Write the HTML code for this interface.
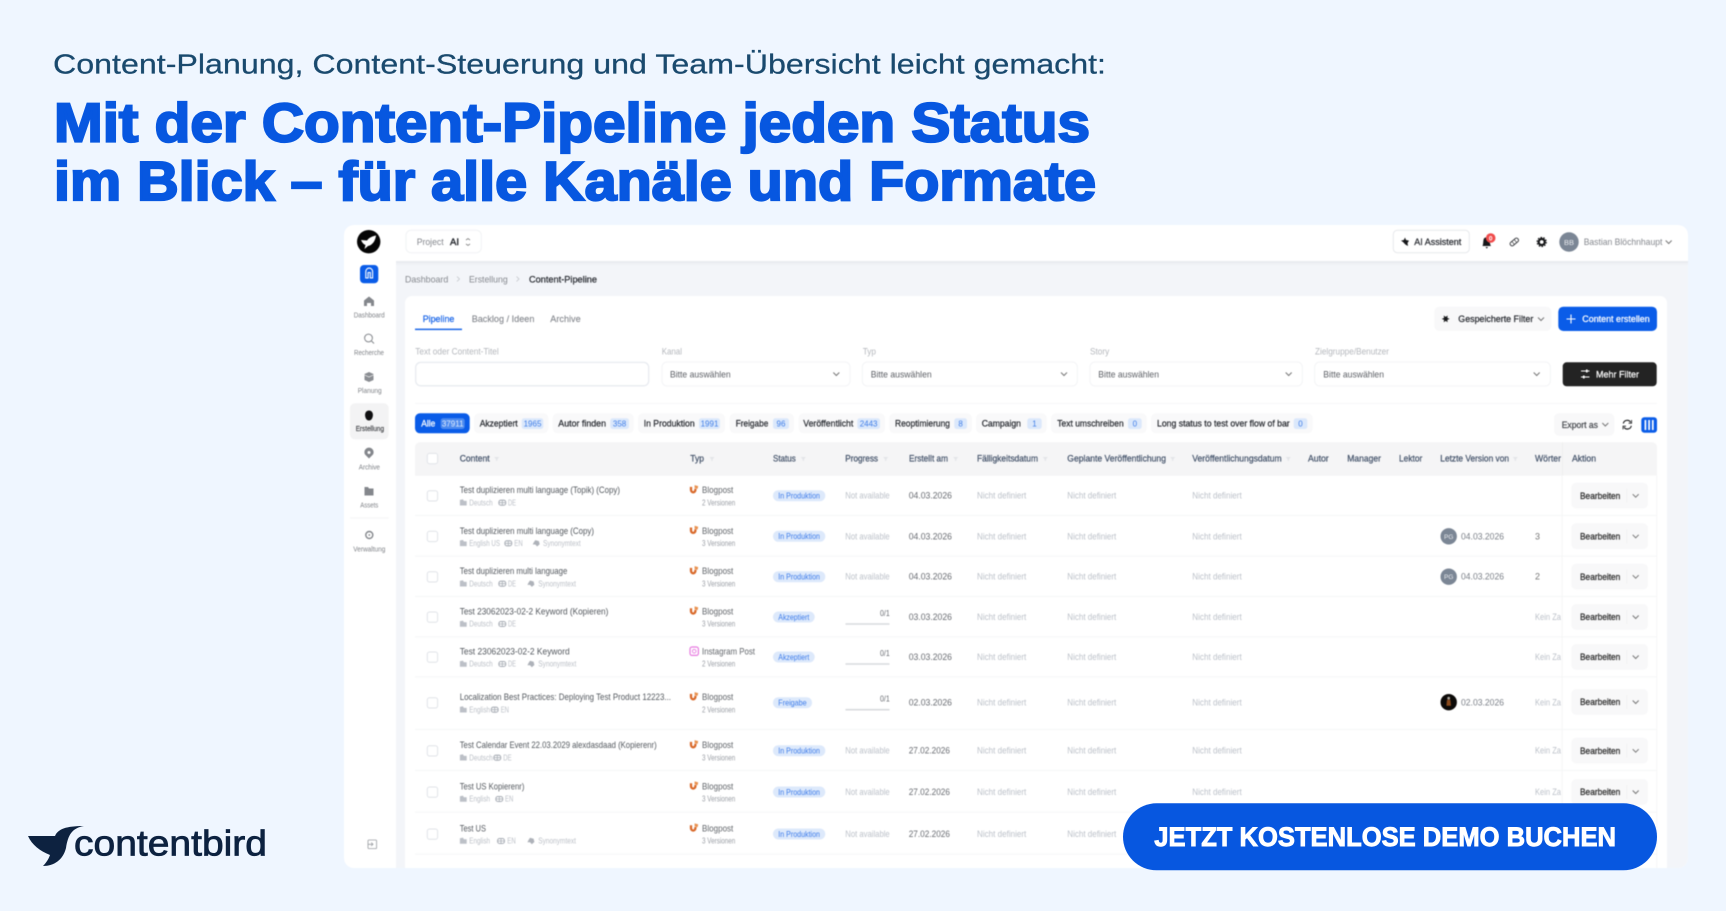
<!DOCTYPE html>
<html lang="de">
<head>
<meta charset="utf-8">
<title>Content-Pipeline</title>
<style>
html,body{margin:0;padding:0;width:1726px;height:911px;overflow:hidden;background:#eff6ff}
svg{display:block}
text{font-family:"Liberation Sans",sans-serif;white-space:pre}
.sl{font-size:7.5px;fill:#7f8287}
.d{font-size:9.5px;fill:#2a2d33;stroke:#2a2d33;stroke-width:.25px}
.g{font-size:9.5px;fill:#85888e}
.lb{font-size:9.5px;fill:#b4b7bc}
.nd{font-size:9.5px;fill:#bcc1c9}
.th{font-size:9.5px;fill:#46556c;stroke:#46556c;stroke-width:.25px}
.ti{font-size:9.5px;fill:#53585e}
.su{font-size:8px;fill:#bcc0c7}
.ty{font-size:9.5px;fill:#62666b}
.ve{font-size:8px;fill:#9a9ea5}
.da{font-size:9.5px;fill:#686b71}
.pl{font-size:8.5px;fill:#3d7cea}
.ba{font-size:8px;fill:#3f7ee8;text-anchor:middle}
.w{font-size:9.5px;fill:#fff;stroke:#fff;stroke-width:.25px}
.be{font-size:9.5px;fill:#333;stroke:#333;stroke-width:.3px}
</style>
</head>
<body>
<svg width="1726" height="911" viewBox="0 0 1726 911" xmlns="http://www.w3.org/2000/svg">
<defs>
<path id="ch" d="M-3,-1.5 L0,1.5 L3,-1.5" fill="none" stroke="#777" stroke-width="1"/>
<path id="so" d="M-2.5,-2 H2.5 L.6,.4 V2 H-.6 V.4 Z" fill="#e3e5e8"/>
<rect id="cb" width="10.3" height="10.3" rx="2.2" fill="#fff" stroke="#e0e3e8" stroke-width="1"/>
<g id="bl"><path d="M-3,-2.8 V.2 A2.2,2.4 0 0 0 1.4,.2 V-1" fill="none" stroke="#d9692a" stroke-width="2.3"/><path d="M.6,-4.6 L4.2,-3.6 L3.6,-.8 L.6,-1.6 Z" fill="#e8914f"/></g>
<g id="fo"><path d="M-3.4,-2.8 L-.4,-3.4 L.6,-1.8 H3.4 V2.8 H-3.4 Z" fill="#bcc0c7"/></g>
<g id="gl"><rect x="-3.4" y="-2.5" width="6.8" height="5" rx="2" fill="none" stroke="#a9aeb6" stroke-width="1.1"/><path d="M0,-2.5 V2.5 M-3,0 H3" stroke="#a9aeb6" stroke-width=".8"/></g>
<g id="sy"><path d="M-1,-3.2 L2.6,-2.2 L3.4,1 L.8,3.2 L-1,1.2 L-3.6,1.2 L-2.6,-.8 Z" fill="#aeb2b9"/></g>
<g id="bt"><rect x="1571.3" y="-13" width="76.7" height="25.8" rx="5" fill="#f8f8f9"/><text class="be" x="1580" y="3.2" textLength="40.3" lengthAdjust="spacingAndGlyphs">Bearbeiten</text><rect x="1626.4" y="-7" width=".8" height="14" fill="#f0f0f1"/><use href="#ch" x="1635.7" y="0"/></g>
</defs>

<rect width="1726" height="911" fill="#eff6ff"/>

<!-- headline -->
<text x="53" y="73.5" style="font-size:28px;fill:#1a4a6e;stroke:#1a4a6e;stroke-width:.25px" textLength="1053" lengthAdjust="spacingAndGlyphs">Content-Planung, Content-Steuerung und Team-Übersicht leicht gemacht:</text>
<text x="54" y="141.7" style="font-size:55px;font-weight:700;fill:#0757e0;stroke:#0757e0;stroke-width:2.2px" textLength="1036" lengthAdjust="spacingAndGlyphs">Mit der Content-Pipeline jeden Status</text>
<text x="54" y="200" style="font-size:55px;font-weight:700;fill:#0757e0;stroke:#0757e0;stroke-width:2.2px" textLength="1042" lengthAdjust="spacingAndGlyphs">im Blick – für alle Kanäle und Formate</text>

<!-- logo -->
<path d="M28,836 L55,836 C58,829 66,826 84,826 C72,828 68,835 66,848 C63,860 54,866 43,866 C47,862 49,858 50,855 C40,851 32,845 28,836Z" fill="#0d2240"/>
<text x="74" y="855.3" style="font-size:36px;fill:#0d2240;stroke:#0d2240;stroke-width:.8px" textLength="193" lengthAdjust="spacingAndGlyphs">contentbird</text>

<!-- app -->
<g style="filter:blur(.4px)">
<rect x="344" y="225" width="1344" height="643" rx="10" fill="#fff"/>
<path d="M396,261 H1688 V858 A10,10 0 0 1 1678,868 H396 Z" fill="#f3f5f9"/>
<rect x="396" y="261" width="1292" height="2" fill="#e9ebf0"/>
<rect x="396" y="263" width="1292" height="2" fill="#eff1f5"/>
<path d="M405,868 V303 A7,7 0 0 1 412,296 H1660 A7,7 0 0 1 1667,303 V868 Z" fill="#fff"/>

<!-- sidebar -->
<circle cx="368.7" cy="241.7" r="11.7" fill="#050505"/>
<path d="M361,240 L367,240.5 C369,237.5 373,236 376,235.5 C375.5,240 373,245 368,246 L364.5,249 L365.5,245 C363,244 362,242 361,240Z" fill="#fff"/>
<rect x="360" y="265" width="18.3" height="18.3" rx="4" fill="#0a5ce8"/>
<path d="M365.8,278 V271.5 A3.4,3.4 0 0 1 372.6,271.5 V278 H370.3 V272.5 H368.1 V278 Z" fill="none" stroke="#fff" stroke-width="1.1"/>
<path d="M369,296.5 L374,300.5 V306 H371 V303 H367 V306 H364 V300.5 Z" fill="#84878c"/>
<text class="sl" x="353.7" y="317.7" textLength="31" lengthAdjust="spacingAndGlyphs">Dashboard</text>
<circle cx="368.5" cy="338" r="3.9" fill="none" stroke="#84878c" stroke-width="1"/><path d="M371.5,341 L374,343.5" stroke="#84878c" stroke-width="1"/>
<text class="sl" x="354" y="355" textLength="30" lengthAdjust="spacingAndGlyphs">Recherche</text>
<path d="M364.5,374 L369,372 L373.5,374 V380 L369,382 L364.5,380 Z" fill="#8b8e93"/><path d="M364.5,375 L369,377 L373.5,375" fill="none" stroke="#fff" stroke-width=".6"/>
<text class="sl" x="357.7" y="393" textLength="24" lengthAdjust="spacingAndGlyphs">Planung</text>
<rect x="350" y="403.3" width="38.7" height="36" rx="5" fill="#f3f3f4"/>
<path d="M369,410.5 C366.5,410.5 365.5,412.5 365.5,413 C364.5,414 365,420.5 369,420.5 C373,420.5 373.5,414 372.5,413 C372.5,412.5 371.5,410.5 369,410.5Z" fill="#101012"/>
<text class="sl" x="355.7" y="431" textLength="28.3" lengthAdjust="spacingAndGlyphs" style="fill:#3a3c40;stroke:#3a3c40;stroke-width:.15px">Erstellung</text>
<path d="M369,458.5 L365,454.5 A4.6,4.6 0 1 1 373,454.5 Z" fill="#84878c"/><circle cx="369" cy="452.5" r="1.5" fill="#fff"/>
<text class="sl" x="358.7" y="469.7" textLength="21.3" lengthAdjust="spacingAndGlyphs">Archive</text>
<path d="M364.5,487 H368 L369,488.5 H373.5 V495.5 H364.5 Z" fill="#84878c"/>
<text class="sl" x="360.3" y="507.3" textLength="18" lengthAdjust="spacingAndGlyphs">Assets</text>
<rect x="350" y="517.5" width="38.7" height=".8" fill="#f1f2f3"/>
<circle cx="369.3" cy="535" r="3.5" fill="none" stroke="#84878c" stroke-width="1.4"/><circle cx="369.3" cy="535" r=".9" fill="#84878c"/>
<text class="sl" x="353.3" y="551.7" textLength="32" lengthAdjust="spacingAndGlyphs">Verwaltung</text>
<rect x="368" y="840" width="8.6" height="8.6" rx="1" fill="none" stroke="#9a9da2" stroke-width=".8"/><path d="M368,844.3 H373 M371.2,842.5 L373,844.3 L371.2,846" fill="none" stroke="#9a9da2" stroke-width=".8"/>

<!-- top bar -->
<rect x="406" y="230.3" width="75.3" height="22.4" rx="5" fill="#fff" stroke="#f1f3f5"/>
<text class="g" x="416.7" y="245" textLength="27" lengthAdjust="spacingAndGlyphs">Project</text>
<text class="d" x="450" y="245" textLength="9" lengthAdjust="spacingAndGlyphs" style="stroke-width:.4px">AI</text>
<path d="M466,240 L468,238.6 L470,240 M466,244 L468,245.4 L470,244" fill="none" stroke="#777" stroke-width=".8"/>
<rect x="1393.3" y="230.3" width="76" height="22.4" rx="4" fill="#fff" stroke="#e7e9ec"/>
<path d="M1405,237.5 L1406,240 L1409,240.6 L1407.5,243 L1408,246 L1405.5,244.6 L1403,242 L1401,240.6 L1403.8,240 Z" fill="#17181a"/>
<text class="d" x="1414.3" y="245" textLength="47" lengthAdjust="spacingAndGlyphs">AI Assistent</text>
<path d="M1482.5,246 C1483.5,244 1483,240 1484,238.5 C1485,237 1488,237 1489,238.5 C1490,240 1489.5,244 1491,246 Z M1485.5,247 H1488 L1486.8,248.6 Z" fill="#17181a"/>
<circle cx="1490.7" cy="238" r="4.8" fill="#ef4b4b"/><text x="1490.7" y="240.3" style="font-size:6.5px;fill:#fff;text-anchor:middle;font-weight:700">0</text>
<g transform="translate(1514.3,242) rotate(-40)"><rect x="-4.8" y="-2" width="9.6" height="4" rx="1.8" fill="none" stroke="#3d3f43" stroke-width="1"/><path d="M-1.5,-2 V2 M1.5,-2 V2" stroke="#3d3f43" stroke-width=".7"/></g>
<circle cx="1541.7" cy="242" r="3" fill="none" stroke="#141517" stroke-width="2.2"/><circle cx="1541.7" cy="242" r="4.6" fill="none" stroke="#141517" stroke-width="1.1" stroke-dasharray="1.6 1.3"/>
<circle cx="1569" cy="242" r="9.7" fill="#7b8695"/>
<text x="1569" y="245" style="font-size:7.5px;fill:#e8eaee;text-anchor:middle">BB</text>
<text class="g" x="1583.7" y="245" textLength="78.7" lengthAdjust="spacingAndGlyphs">Bastian Blöchnhaupt</text>
<use href="#ch" x="1668.7" y="242"/>

<!-- breadcrumb -->
<text class="g" x="405" y="282.3" textLength="43.3" lengthAdjust="spacingAndGlyphs">Dashboard</text>
<path d="M457,276.5 L459.5,279 L457,281.5" fill="none" stroke="#c3c6cb" stroke-width=".8"/>
<text class="g" x="469" y="282.3" textLength="38.7" lengthAdjust="spacingAndGlyphs">Erstellung</text>
<path d="M516.5,276.5 L519,279 L516.5,281.5" fill="none" stroke="#c3c6cb" stroke-width=".8"/>
<text class="d" x="529" y="282.3" textLength="68" lengthAdjust="spacingAndGlyphs">Content-Pipeline</text>

<!-- tabs -->
<text class="d" x="422.7" y="322" textLength="31.7" lengthAdjust="spacingAndGlyphs" style="fill:#1a66e8;stroke:#1a66e8">Pipeline</text>
<rect x="415" y="328.6" width="47" height="1.5" fill="#1a66e8"/>
<text class="g" x="471.7" y="322" textLength="62.7" lengthAdjust="spacingAndGlyphs" style="stroke:#8d9096;stroke-width:.15px">Backlog / Ideen</text>
<text class="g" x="550.3" y="322" textLength="30.4" lengthAdjust="spacingAndGlyphs" style="stroke:#8d9096;stroke-width:.15px">Archive</text>

<rect x="1434.3" y="306.7" width="117" height="24.3" rx="5" fill="#f8f8f9"/>
<path d="M1445.7,318.9 m-4,0 l2.4,-1 l-.4,-2.4 l2,1.4 l2,-1.4 l-.4,2.4 l2.4,1 l-2.4,1 l.4,2.4 l-2,-1.4 l-2,1.4 l.4,-2.4 Z" fill="#17181a"/>
<text class="d" x="1458.3" y="322" textLength="75" lengthAdjust="spacingAndGlyphs">Gespeicherte Filter</text>
<use href="#ch" x="1541" y="319"/>
<rect x="1558.3" y="306.7" width="98.7" height="24.3" rx="5" fill="#0a5ce8"/>
<path d="M1571,314.5 V323.5 M1566.5,319 H1575.5" stroke="#fff" stroke-width="1.1"/>
<text class="w" x="1582.3" y="322" textLength="67.4" lengthAdjust="spacingAndGlyphs">Content erstellen</text>

<!-- filters -->
<text class="lb" x="415.3" y="354.3" textLength="83.4" lengthAdjust="spacingAndGlyphs">Text oder Content-Titel</text>
<rect x="415.7" y="362.4" width="233" height="23.4" rx="5" fill="#fff" stroke="#e8ebf0" stroke-width="1.3"/>
<text class="lb" x="661.7" y="354.3" textLength="20.3" lengthAdjust="spacingAndGlyphs">Kanal</text>
<rect x="662" y="362" width="188" height="24" rx="5" fill="#fff" stroke="#f3f4f6"/>
<text class="g" x="670" y="377.3" textLength="60.7" lengthAdjust="spacingAndGlyphs" style="fill:#5d6066">Bitte auswählen</text>
<use href="#ch" x="836.3" y="374"/>
<text class="lb" x="862.7" y="354.3" textLength="13.3" lengthAdjust="spacingAndGlyphs">Typ</text>
<rect x="862.3" y="362" width="215" height="24" rx="5" fill="#fff" stroke="#f3f4f6"/>
<text class="g" x="870.7" y="377.3" textLength="61" lengthAdjust="spacingAndGlyphs" style="fill:#5d6066">Bitte auswählen</text>
<use href="#ch" x="1064" y="374"/>
<text class="lb" x="1090" y="354.3" textLength="19.3" lengthAdjust="spacingAndGlyphs">Story</text>
<rect x="1090" y="362" width="212.3" height="24" rx="5" fill="#fff" stroke="#f3f4f6"/>
<text class="g" x="1098.3" y="377.3" textLength="60.7" lengthAdjust="spacingAndGlyphs" style="fill:#5d6066">Bitte auswählen</text>
<use href="#ch" x="1288.7" y="374"/>
<text class="lb" x="1315" y="354.3" textLength="74" lengthAdjust="spacingAndGlyphs">Zielgruppe/Benutzer</text>
<rect x="1314.7" y="362" width="235.6" height="24" rx="5" fill="#fff" stroke="#f3f4f6"/>
<text class="g" x="1323.3" y="377.3" textLength="60.7" lengthAdjust="spacingAndGlyphs" style="fill:#5d6066">Bitte auswählen</text>
<use href="#ch" x="1536.7" y="374"/>
<rect x="1562.7" y="362.3" width="94" height="24" rx="4" fill="#232323"/>
<path d="M1581,371 H1589.5 M1581,377 H1589.5" stroke="#fff" stroke-width="1"/><rect x="1586" y="369.5" width="1.6" height="3" fill="#fff"/><rect x="1583" y="375.5" width="1.6" height="3" fill="#fff"/>
<text class="w" x="1596" y="377.3" textLength="43" lengthAdjust="spacingAndGlyphs">Mehr Filter</text>
<rect x="415" y="403" width="1242" height=".9" fill="#f5f6f7"/>

<!-- chips -->
<rect x="415" y="413.3" width="54.7" height="20" rx="5" fill="#0a5ce8"/>
<text class="w" x="421.3" y="426.3" textLength="14" lengthAdjust="spacingAndGlyphs">Alle</text>
<rect x="440.7" y="418.3" width="24" height="10.7" rx="2.5" fill="#4d8bef"/>
<text x="452.7" y="426.4" style="font-size:8px;fill:#e4eefc;text-anchor:middle">37911</text>

<rect x="474" y="413.3" width="74.3" height="20" rx="5" fill="#f9f9fa"/>
<text class="d" x="479.7" y="426.3" textLength="38" lengthAdjust="spacingAndGlyphs">Akzeptiert</text>
<rect x="521.7" y="418.3" width="21.6" height="10.7" rx="2.5" fill="#dbe8fb"/><text class="ba" x="532.5" y="426.4">1965</text>

<rect x="552.7" y="413.3" width="81" height="20" rx="5" fill="#f9f9fa"/>
<text class="d" x="558.3" y="426.3" textLength="47.7" lengthAdjust="spacingAndGlyphs">Autor finden</text>
<rect x="610.3" y="418.3" width="18.7" height="10.7" rx="2.5" fill="#dbe8fb"/><text class="ba" x="619.6" y="426.4">358</text>

<rect x="638" y="413.3" width="87" height="20" rx="5" fill="#f9f9fa"/>
<text class="d" x="643.7" y="426.3" textLength="51" lengthAdjust="spacingAndGlyphs">In Produktion</text>
<rect x="699" y="418.3" width="21" height="10.7" rx="2.5" fill="#dbe8fb"/><text class="ba" x="709.5" y="426.4">1991</text>

<rect x="729.7" y="413.3" width="64.3" height="20" rx="5" fill="#f9f9fa"/>
<text class="d" x="735.7" y="426.3" textLength="32.6" lengthAdjust="spacingAndGlyphs">Freigabe</text>
<rect x="773" y="418.3" width="16" height="10.7" rx="2.5" fill="#dbe8fb"/><text class="ba" x="781" y="426.4">96</text>

<rect x="798.7" y="413.3" width="86.3" height="20" rx="5" fill="#f9f9fa"/>
<text class="d" x="803.3" y="426.3" textLength="50" lengthAdjust="spacingAndGlyphs">Veröffentlicht</text>
<rect x="857.3" y="418.3" width="22.7" height="10.7" rx="2.5" fill="#dbe8fb"/><text class="ba" x="868.6" y="426.4">2443</text>

<rect x="889.3" y="413.3" width="82.7" height="20" rx="5" fill="#f9f9fa"/>
<text class="d" x="895" y="426.3" textLength="55" lengthAdjust="spacingAndGlyphs">Reoptimierung</text>
<rect x="954.3" y="418.3" width="12.7" height="10.7" rx="2.5" fill="#dbe8fb"/><text class="ba" x="960.6" y="426.4">8</text>

<rect x="976" y="413.3" width="70.7" height="20" rx="5" fill="#f9f9fa"/>
<text class="d" x="981.7" y="426.3" textLength="39.3" lengthAdjust="spacingAndGlyphs">Campaign</text>
<rect x="1027.3" y="418.3" width="14.4" height="10.7" rx="2.5" fill="#dbe8fb"/><text class="ba" x="1034.5" y="426.4">1</text>

<rect x="1051" y="413.3" width="95.7" height="20" rx="5" fill="#f9f9fa"/>
<text class="d" x="1057.3" y="426.3" textLength="66.4" lengthAdjust="spacingAndGlyphs">Text umschreiben</text>
<rect x="1128" y="418.3" width="13.7" height="10.7" rx="2.5" fill="#dbe8fb"/><text class="ba" x="1134.8" y="426.4">0</text>

<rect x="1151" y="413.3" width="161.7" height="20" rx="5" fill="#f9f9fa"/>
<text class="d" x="1157" y="426.3" textLength="132.7" lengthAdjust="spacingAndGlyphs">Long status to test over flow of bar</text>
<rect x="1293.7" y="418.3" width="13.6" height="10.7" rx="2.5" fill="#dbe8fb"/><text class="ba" x="1300.5" y="426.4">0</text>

<rect x="1554" y="413.3" width="60.3" height="22.4" rx="5" fill="#f8f8f9"/>
<text class="d" x="1561.7" y="428" textLength="36.3" lengthAdjust="spacingAndGlyphs" style="fill:#4a4d52;stroke:#4a4d52">Export as</text>
<use href="#ch" x="1605.3" y="424.5"/>
<path d="M1623.3,423.5 A4,4 0 0 1 1630.6,422.2 M1631.3,425.8 A4,4 0 0 1 1624,427.2" fill="none" stroke="#17181a" stroke-width="1.1"/>
<path d="M1631.6,420 V423.2 H1628.6 M1623,429.4 V426.2 H1626" fill="none" stroke="#17181a" stroke-width=".8"/>
<rect x="1641.3" y="417.3" width="15.7" height="15.4" rx="3" fill="#0a5ce8"/>
<path d="M1645.4,420 V430 M1649.1,420 V430 M1652.8,420 V430" stroke="#fff" stroke-width="1.7"/>

<!-- table header -->
<path d="M415,475.7 V447.3 A5,5 0 0 1 420,442.3 H1652 A5,5 0 0 1 1657,447.3 V475.7 Z" fill="#f5f5f6"/>
<use href="#cb" x="427.3" y="453.4"/>
<text class="th" x="459.7" y="461.7" textLength="30" lengthAdjust="spacingAndGlyphs">Content</text><use href="#so" x="496.7" y="459"/>
<text class="th" x="690.3" y="461.7" textLength="13.7" lengthAdjust="spacingAndGlyphs">Typ</text><use href="#so" x="712" y="459"/>
<text class="th" x="773" y="461.7" textLength="22.7" lengthAdjust="spacingAndGlyphs">Status</text><use href="#so" x="803.3" y="459"/>
<text class="th" x="845.3" y="461.7" textLength="32.7" lengthAdjust="spacingAndGlyphs">Progress</text><use href="#so" x="885.7" y="459"/>
<text class="th" x="909" y="461.7" textLength="39" lengthAdjust="spacingAndGlyphs">Erstellt am</text><use href="#so" x="955.7" y="459"/>
<text class="th" x="977" y="461.7" textLength="61" lengthAdjust="spacingAndGlyphs">Fälligkeitsdatum</text><use href="#so" x="1045.3" y="459"/>
<text class="th" x="1067.3" y="461.7" textLength="98.7" lengthAdjust="spacingAndGlyphs">Geplante Veröffentlichung</text><use href="#so" x="1172.7" y="459"/>
<text class="th" x="1192.3" y="461.7" textLength="89.4" lengthAdjust="spacingAndGlyphs">Veröffentlichungsdatum</text><use href="#so" x="1288.3" y="459"/>
<text class="th" x="1308" y="461.7" textLength="20.7" lengthAdjust="spacingAndGlyphs">Autor</text>
<text class="th" x="1347.3" y="461.7" textLength="33.7" lengthAdjust="spacingAndGlyphs">Manager</text>
<text class="th" x="1399" y="461.7" textLength="23.3" lengthAdjust="spacingAndGlyphs">Lektor</text>
<text class="th" x="1440.3" y="461.7" textLength="68.7" lengthAdjust="spacingAndGlyphs">Letzte Version von</text><use href="#so" x="1515.3" y="459"/>
<text class="th" x="1535" y="461.7" textLength="26" lengthAdjust="spacingAndGlyphs">Wörter</text>
<rect x="1562" y="442.3" width="1" height="33.4" fill="#efeff0"/>
<text class="th" x="1572" y="461.7" textLength="24" lengthAdjust="spacingAndGlyphs">Aktion</text>

<!-- row 1 -->
<g transform="translate(0,495.7)">
<use href="#cb" x="427.3" y="-5"/>
<text class="ti" x="459.7" y="-2.5" textLength="160.3" lengthAdjust="spacingAndGlyphs">Test duplizieren multi language (Topik) (Copy)</text>
<use href="#fo" x="463.3" y="7"/><text class="su" x="469.3" y="9.6" textLength="23.4" lengthAdjust="spacingAndGlyphs">Deutsch</text>
<use href="#gl" x="502.3" y="7"/><text class="su" x="508" y="9.6" textLength="8" lengthAdjust="spacingAndGlyphs">DE</text>
<use href="#bl" x="694" y="-6"/>
<text class="ty" x="702" y="-2.5" textLength="31.3" lengthAdjust="spacingAndGlyphs">Blogpost</text>
<text class="ve" x="702" y="9.6" textLength="33.3" lengthAdjust="spacingAndGlyphs">2 Versionen</text>
<rect x="773" y="-5.5" width="52.3" height="11" rx="5.5" fill="#dde9fb"/><text class="pl" x="778.3" y="2.9" textLength="41.7" lengthAdjust="spacingAndGlyphs">In Produktion</text>
<text class="nd" x="845.3" y="3" textLength="44.4" lengthAdjust="spacingAndGlyphs">Not available</text>
<text class="da" x="908.7" y="3" textLength="43.3" lengthAdjust="spacingAndGlyphs">04.03.2026</text>
<text class="nd" x="977" y="3" textLength="49.3" lengthAdjust="spacingAndGlyphs">Nicht definiert</text>
<text class="nd" x="1067.3" y="3" textLength="49" lengthAdjust="spacingAndGlyphs">Nicht definiert</text>
<text class="nd" x="1192.3" y="3" textLength="49.4" lengthAdjust="spacingAndGlyphs">Nicht definiert</text>
</g>
<!-- row 2 -->
<g transform="translate(0,536.3)">
<use href="#cb" x="427.3" y="-5"/>
<text class="ti" x="459.7" y="-2.5" textLength="134.3" lengthAdjust="spacingAndGlyphs">Test duplizieren multi language (Copy)</text>
<use href="#fo" x="463.3" y="7"/><text class="su" x="469.3" y="9.6" textLength="30.7" lengthAdjust="spacingAndGlyphs">English US</text>
<use href="#gl" x="508.3" y="7"/><text class="su" x="514.3" y="9.6" textLength="8.4" lengthAdjust="spacingAndGlyphs">EN</text>
<use href="#sy" x="536.3" y="7"/><text class="su" x="543" y="9.6" textLength="37.7" lengthAdjust="spacingAndGlyphs">Synonymtext</text>
<use href="#bl" x="694" y="-6"/>
<text class="ty" x="702" y="-2.5" textLength="31.3" lengthAdjust="spacingAndGlyphs">Blogpost</text>
<text class="ve" x="702" y="9.6" textLength="33.3" lengthAdjust="spacingAndGlyphs">3 Versionen</text>
<rect x="773" y="-5.5" width="52.3" height="11" rx="5.5" fill="#dde9fb"/><text class="pl" x="778.3" y="2.9" textLength="41.7" lengthAdjust="spacingAndGlyphs">In Produktion</text>
<text class="nd" x="845.3" y="3" textLength="44.4" lengthAdjust="spacingAndGlyphs">Not available</text>
<text class="da" x="908.7" y="3" textLength="43.3" lengthAdjust="spacingAndGlyphs">04.03.2026</text>
<text class="nd" x="977" y="3" textLength="49.3" lengthAdjust="spacingAndGlyphs">Nicht definiert</text>
<text class="nd" x="1067.3" y="3" textLength="49" lengthAdjust="spacingAndGlyphs">Nicht definiert</text>
<text class="nd" x="1192.3" y="3" textLength="49.4" lengthAdjust="spacingAndGlyphs">Nicht definiert</text>
<circle cx="1448.7" cy="0" r="8.2" fill="#7b8695"/><text x="1448.7" y="2.5" style="font-size:6.5px;fill:#e8eaee;text-anchor:middle">PG</text>
<text class="g" x="1461" y="3" textLength="43" lengthAdjust="spacingAndGlyphs" style="fill:#7a7f87">04.03.2026</text>
<text class="da" x="1535" y="3" textLength="5" lengthAdjust="spacingAndGlyphs" style="fill:#777">3</text>
</g>
<!-- row 3 -->
<g transform="translate(0,576.7)">
<use href="#cb" x="427.3" y="-5"/>
<text class="ti" x="459.7" y="-2.5" textLength="107.7" lengthAdjust="spacingAndGlyphs">Test duplizieren multi language</text>
<use href="#fo" x="463.3" y="7"/><text class="su" x="469.3" y="9.6" textLength="23.4" lengthAdjust="spacingAndGlyphs">Deutsch</text>
<use href="#gl" x="502.3" y="7"/><text class="su" x="508" y="9.6" textLength="8" lengthAdjust="spacingAndGlyphs">DE</text>
<use href="#sy" x="531" y="7"/><text class="su" x="538.3" y="9.6" textLength="37.7" lengthAdjust="spacingAndGlyphs">Synonymtext</text>
<use href="#bl" x="694" y="-6"/>
<text class="ty" x="702" y="-2.5" textLength="31.3" lengthAdjust="spacingAndGlyphs">Blogpost</text>
<text class="ve" x="702" y="9.6" textLength="33.3" lengthAdjust="spacingAndGlyphs">3 Versionen</text>
<rect x="773" y="-5.5" width="52.3" height="11" rx="5.5" fill="#dde9fb"/><text class="pl" x="778.3" y="2.9" textLength="41.7" lengthAdjust="spacingAndGlyphs">In Produktion</text>
<text class="nd" x="845.3" y="3" textLength="44.4" lengthAdjust="spacingAndGlyphs">Not available</text>
<text class="da" x="908.7" y="3" textLength="43.3" lengthAdjust="spacingAndGlyphs">04.03.2026</text>
<text class="nd" x="977" y="3" textLength="49.3" lengthAdjust="spacingAndGlyphs">Nicht definiert</text>
<text class="nd" x="1067.3" y="3" textLength="49" lengthAdjust="spacingAndGlyphs">Nicht definiert</text>
<text class="nd" x="1192.3" y="3" textLength="49.4" lengthAdjust="spacingAndGlyphs">Nicht definiert</text>
<circle cx="1448.7" cy="0" r="8.2" fill="#7b8695"/><text x="1448.7" y="2.5" style="font-size:6.5px;fill:#e8eaee;text-anchor:middle">PG</text>
<text class="g" x="1461" y="3" textLength="43" lengthAdjust="spacingAndGlyphs" style="fill:#7a7f87">04.03.2026</text>
<text class="da" x="1535" y="3" textLength="5" lengthAdjust="spacingAndGlyphs" style="fill:#777">2</text>
</g>
<!-- row 4 -->
<g transform="translate(0,617)">
<use href="#cb" x="427.3" y="-5"/>
<text class="ti" x="459.7" y="-2.5" textLength="148.7" lengthAdjust="spacingAndGlyphs">Test 23062023-02-2 Keyword (Kopieren)</text>
<use href="#fo" x="463.3" y="7"/><text class="su" x="469.3" y="9.6" textLength="23.4" lengthAdjust="spacingAndGlyphs">Deutsch</text>
<use href="#gl" x="502.3" y="7"/><text class="su" x="508" y="9.6" textLength="8" lengthAdjust="spacingAndGlyphs">DE</text>
<use href="#bl" x="694" y="-6"/>
<text class="ty" x="702" y="-2.5" textLength="31.3" lengthAdjust="spacingAndGlyphs">Blogpost</text>
<text class="ve" x="702" y="9.6" textLength="33.3" lengthAdjust="spacingAndGlyphs">3 Versionen</text>
<rect x="773" y="-5.5" width="41.7" height="11" rx="5.5" fill="#dde9fb"/><text class="pl" x="778.3" y="2.9" textLength="31" lengthAdjust="spacingAndGlyphs">Akzeptiert</text>
<text class="da" x="880" y="-1" textLength="9.7" lengthAdjust="spacingAndGlyphs" style="font-size:8.5px">0/1</text>
<rect x="845.3" y="6.2" width="44.4" height="1.6" rx=".8" fill="#d8dadd"/>
<text class="da" x="908.7" y="3" textLength="43.3" lengthAdjust="spacingAndGlyphs">03.03.2026</text>
<text class="nd" x="977" y="3" textLength="49.3" lengthAdjust="spacingAndGlyphs">Nicht definiert</text>
<text class="nd" x="1067.3" y="3" textLength="49" lengthAdjust="spacingAndGlyphs">Nicht definiert</text>
<text class="nd" x="1192.3" y="3" textLength="49.4" lengthAdjust="spacingAndGlyphs">Nicht definiert</text>
<text class="nd" x="1535" y="3" textLength="26" lengthAdjust="spacingAndGlyphs">Kein Za</text>
</g>
<!-- row 5 -->
<g transform="translate(0,657)">
<use href="#cb" x="427.3" y="-5"/>
<text class="ti" x="459.7" y="-2.5" textLength="110" lengthAdjust="spacingAndGlyphs">Test 23062023-02-2 Keyword</text>
<use href="#fo" x="463.3" y="7"/><text class="su" x="469.3" y="9.6" textLength="23.4" lengthAdjust="spacingAndGlyphs">Deutsch</text>
<use href="#gl" x="502.3" y="7"/><text class="su" x="508" y="9.6" textLength="8" lengthAdjust="spacingAndGlyphs">DE</text>
<use href="#sy" x="531" y="7"/><text class="su" x="538.3" y="9.6" textLength="38" lengthAdjust="spacingAndGlyphs">Synonymtext</text>
<rect x="690" y="-10" width="8.4" height="8.4" rx="2" fill="none" stroke="#e77ae0" stroke-width="1.2"/><circle cx="694.2" cy="-5.8" r="1.8" fill="none" stroke="#e77ae0" stroke-width=".9"/>
<text class="ty" x="702" y="-2.5" textLength="53" lengthAdjust="spacingAndGlyphs">Instagram Post</text>
<text class="ve" x="702" y="9.6" textLength="33.3" lengthAdjust="spacingAndGlyphs">2 Versionen</text>
<rect x="773" y="-5.5" width="41.7" height="11" rx="5.5" fill="#dde9fb"/><text class="pl" x="778.3" y="2.9" textLength="31" lengthAdjust="spacingAndGlyphs">Akzeptiert</text>
<text class="da" x="880" y="-1" textLength="9.7" lengthAdjust="spacingAndGlyphs" style="font-size:8.5px">0/1</text>
<rect x="845.3" y="6.2" width="44.4" height="1.6" rx=".8" fill="#d8dadd"/>
<text class="da" x="908.7" y="3" textLength="43.3" lengthAdjust="spacingAndGlyphs">03.03.2026</text>
<text class="nd" x="977" y="3" textLength="49.3" lengthAdjust="spacingAndGlyphs">Nicht definiert</text>
<text class="nd" x="1067.3" y="3" textLength="49" lengthAdjust="spacingAndGlyphs">Nicht definiert</text>
<text class="nd" x="1192.3" y="3" textLength="49.4" lengthAdjust="spacingAndGlyphs">Nicht definiert</text>
<text class="nd" x="1535" y="3" textLength="26" lengthAdjust="spacingAndGlyphs">Kein Za</text>
</g>
<!-- row 6 -->
<g transform="translate(0,702.7)">
<use href="#cb" x="427.3" y="-5"/>
<text class="ti" x="459.7" y="-2.5" textLength="211.3" lengthAdjust="spacingAndGlyphs">Localization Best Practices: Deploying Test Product 12223...</text>
<use href="#fo" x="463.3" y="7"/><text class="su" x="469.3" y="9.6" textLength="20.7" lengthAdjust="spacingAndGlyphs">English</text>
<use href="#gl" x="494.7" y="7"/><text class="su" x="500.7" y="9.6" textLength="8.3" lengthAdjust="spacingAndGlyphs">EN</text>
<use href="#bl" x="694" y="-6"/>
<text class="ty" x="702" y="-2.5" textLength="31.3" lengthAdjust="spacingAndGlyphs">Blogpost</text>
<text class="ve" x="702" y="9.6" textLength="33.3" lengthAdjust="spacingAndGlyphs">2 Versionen</text>
<rect x="773" y="-5.5" width="39" height="11" rx="5.5" fill="#dde9fb"/><text class="pl" x="778.3" y="2.9" textLength="28.4" lengthAdjust="spacingAndGlyphs">Freigabe</text>
<text class="da" x="880" y="-1" textLength="9.7" lengthAdjust="spacingAndGlyphs" style="font-size:8.5px">0/1</text>
<rect x="845.3" y="6.2" width="44.4" height="1.6" rx=".8" fill="#d8dadd"/>
<text class="da" x="908.7" y="3" textLength="43.3" lengthAdjust="spacingAndGlyphs">02.03.2026</text>
<text class="nd" x="977" y="3" textLength="49.3" lengthAdjust="spacingAndGlyphs">Nicht definiert</text>
<text class="nd" x="1067.3" y="3" textLength="49" lengthAdjust="spacingAndGlyphs">Nicht definiert</text>
<text class="nd" x="1192.3" y="3" textLength="49.4" lengthAdjust="spacingAndGlyphs">Nicht definiert</text>
<circle cx="1448.7" cy="-.5" r="8.2" fill="#0c0a08"/><path d="M1447,-3 H1450.4 L1451,3 H1446.4 Z" fill="#8a4a1c"/><circle cx="1448.7" cy="-4.5" r="1.4" fill="#a8a49c"/>
<text class="g" x="1461" y="3" textLength="43" lengthAdjust="spacingAndGlyphs" style="fill:#7a7f87">02.03.2026</text>
<text class="nd" x="1535" y="3" textLength="26" lengthAdjust="spacingAndGlyphs">Kein Za</text>
</g>
<!-- row 7 -->
<g transform="translate(0,750.7)">
<use href="#cb" x="427.3" y="-5"/>
<text class="ti" x="459.7" y="-2.5" textLength="197" lengthAdjust="spacingAndGlyphs">Test Calendar Event 22.03.2029 alexdasdaad (Kopierenr)</text>
<use href="#fo" x="463.3" y="7"/><text class="su" x="469.3" y="9.6" textLength="23.4" lengthAdjust="spacingAndGlyphs">Deutsch</text>
<use href="#gl" x="497.3" y="7"/><text class="su" x="503.3" y="9.6" textLength="8.4" lengthAdjust="spacingAndGlyphs">DE</text>
<use href="#bl" x="694" y="-6"/>
<text class="ty" x="702" y="-2.5" textLength="31.3" lengthAdjust="spacingAndGlyphs">Blogpost</text>
<text class="ve" x="702" y="9.6" textLength="33.3" lengthAdjust="spacingAndGlyphs">3 Versionen</text>
<rect x="773" y="-5.5" width="52.3" height="11" rx="5.5" fill="#dde9fb"/><text class="pl" x="778.3" y="2.9" textLength="41.7" lengthAdjust="spacingAndGlyphs">In Produktion</text>
<text class="nd" x="845.3" y="3" textLength="44.4" lengthAdjust="spacingAndGlyphs">Not available</text>
<text class="da" x="908.7" y="3" textLength="41.3" lengthAdjust="spacingAndGlyphs">27.02.2026</text>
<text class="nd" x="977" y="3" textLength="49.3" lengthAdjust="spacingAndGlyphs">Nicht definiert</text>
<text class="nd" x="1067.3" y="3" textLength="49" lengthAdjust="spacingAndGlyphs">Nicht definiert</text>
<text class="nd" x="1192.3" y="3" textLength="49.4" lengthAdjust="spacingAndGlyphs">Nicht definiert</text>
<text class="nd" x="1535" y="3" textLength="26" lengthAdjust="spacingAndGlyphs">Kein Za</text>
</g>
<!-- row 8 -->
<g transform="translate(0,792)">
<use href="#cb" x="427.3" y="-5"/>
<text class="ti" x="459.7" y="-2.5" textLength="64.7" lengthAdjust="spacingAndGlyphs">Test US Kopierenr)</text>
<use href="#fo" x="463.3" y="7"/><text class="su" x="469.3" y="9.6" textLength="20.7" lengthAdjust="spacingAndGlyphs">English</text>
<use href="#gl" x="499.3" y="7"/><text class="su" x="505" y="9.6" textLength="8.3" lengthAdjust="spacingAndGlyphs">EN</text>
<use href="#bl" x="694" y="-6"/>
<text class="ty" x="702" y="-2.5" textLength="31.3" lengthAdjust="spacingAndGlyphs">Blogpost</text>
<text class="ve" x="702" y="9.6" textLength="33.3" lengthAdjust="spacingAndGlyphs">3 Versionen</text>
<rect x="773" y="-5.5" width="52.3" height="11" rx="5.5" fill="#dde9fb"/><text class="pl" x="778.3" y="2.9" textLength="41.7" lengthAdjust="spacingAndGlyphs">In Produktion</text>
<text class="nd" x="845.3" y="3" textLength="44.4" lengthAdjust="spacingAndGlyphs">Not available</text>
<text class="da" x="908.7" y="3" textLength="41.3" lengthAdjust="spacingAndGlyphs">27.02.2026</text>
<text class="nd" x="977" y="3" textLength="49.3" lengthAdjust="spacingAndGlyphs">Nicht definiert</text>
<text class="nd" x="1067.3" y="3" textLength="49" lengthAdjust="spacingAndGlyphs">Nicht definiert</text>
<text class="nd" x="1192.3" y="3" textLength="49.4" lengthAdjust="spacingAndGlyphs">Nicht definiert</text>
<text class="nd" x="1535" y="3" textLength="26" lengthAdjust="spacingAndGlyphs">Kein Za</text>
</g>
<!-- row 9 -->
<g transform="translate(0,834)">
<use href="#cb" x="427.3" y="-5"/>
<text class="ti" x="459.7" y="-2.5" textLength="26.3" lengthAdjust="spacingAndGlyphs">Test US</text>
<use href="#fo" x="463.3" y="7"/><text class="su" x="469.3" y="9.6" textLength="20.7" lengthAdjust="spacingAndGlyphs">English</text>
<use href="#gl" x="501" y="7"/><text class="su" x="507.3" y="9.6" textLength="8.4" lengthAdjust="spacingAndGlyphs">EN</text>
<use href="#sy" x="531" y="7"/><text class="su" x="538.3" y="9.6" textLength="37.7" lengthAdjust="spacingAndGlyphs">Synonymtext</text>
<use href="#bl" x="694" y="-6"/>
<text class="ty" x="702" y="-2.5" textLength="31.3" lengthAdjust="spacingAndGlyphs">Blogpost</text>
<text class="ve" x="702" y="9.6" textLength="33.3" lengthAdjust="spacingAndGlyphs">3 Versionen</text>
<rect x="773" y="-5.5" width="52.3" height="11" rx="5.5" fill="#dde9fb"/><text class="pl" x="778.3" y="2.9" textLength="41.7" lengthAdjust="spacingAndGlyphs">In Produktion</text>
<text class="nd" x="845.3" y="3" textLength="44.4" lengthAdjust="spacingAndGlyphs">Not available</text>
<text class="da" x="908.7" y="3" textLength="41.3" lengthAdjust="spacingAndGlyphs">27.02.2026</text>
<text class="nd" x="977" y="3" textLength="49.3" lengthAdjust="spacingAndGlyphs">Nicht definiert</text>
<text class="nd" x="1067.3" y="3" textLength="49" lengthAdjust="spacingAndGlyphs">Nicht definiert</text>
</g>

<!-- sticky column -->
<rect x="1561.6" y="475.7" width="95.4" height="392.3" fill="#fff"/>
<rect x="1561.6" y="475.7" width="1" height="392.3" fill="#f5f5f6"/>
<rect x="1656.4" y="475.7" width=".8" height="392.3" fill="#f5f5f6"/>
<!-- row dividers -->
<g fill="#f4f5f6">
<rect x="415" y="515" width="1242" height=".9"/>
<rect x="415" y="555.7" width="1242" height=".9"/>
<rect x="415" y="596" width="1242" height=".9"/>
<rect x="415" y="636.4" width="1242" height=".9"/>
<rect x="415" y="676.4" width="1242" height=".9"/>
<rect x="415" y="729" width="1242" height=".9"/>
<rect x="415" y="770" width="1242" height=".9"/>
<rect x="415" y="811.7" width="1242" height=".9"/>
<rect x="415" y="853.7" width="1242" height=".9"/>
</g>
<use href="#bt" x="0" y="495.7"/>
<use href="#bt" x="0" y="536.3"/>
<use href="#bt" x="0" y="576.7"/>
<use href="#bt" x="0" y="617"/>
<use href="#bt" x="0" y="657"/>
<use href="#bt" x="0" y="702"/>
<use href="#bt" x="0" y="750.7"/>
<use href="#bt" x="0" y="792"/>
</g>

<!-- CTA -->
<rect x="1123" y="803.3" width="534" height="67" rx="33.5" fill="#0757e0"/>
<text x="1154.3" y="846" style="font-size:27px;font-weight:700;fill:#fff;stroke:#fff;stroke-width:.9px" textLength="461.7" lengthAdjust="spacingAndGlyphs">JETZT KOSTENLOSE DEMO BUCHEN</text>
</svg>
</body>
</html>
